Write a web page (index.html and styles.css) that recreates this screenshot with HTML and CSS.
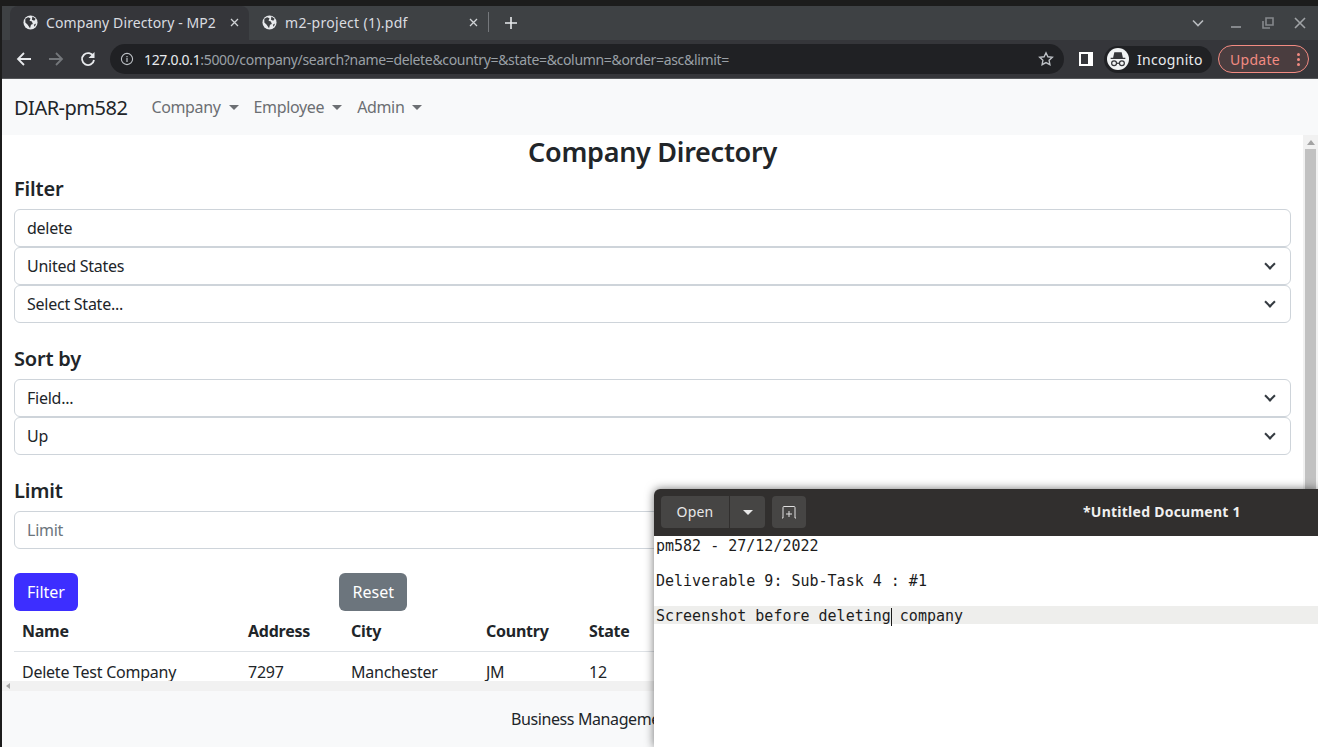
FILE: index.html
```html
<!DOCTYPE html>
<html lang="en">
<head>
    <meta charset="UTF-8">
    <meta name="viewport" content="width=device-width, initial-scale=1.0">
    <title>Company Directory - MP2</title>
    <link rel="stylesheet" href="styles.css">
</head>
<body>

<div class="browser">
    <div class="tabstrip">
        <div class="tab tab-active">
            <svg class="globe" viewBox="0 0 16 16"><circle cx="8" cy="8" r="7.500" fill="#e8eaed"/><path d="M2.500 4l3-1.500 2.500 1-1 2.500 2.500 1 1 2.500-2 1-1 3.500-2.500-3.500-2.500-2.500zM10 1.500l3.500 2.500-1.500 2-2.500-1zM11.500 10.500l2.500-1.500-1.500 3.500z" fill="#35363a"/></svg>
            <span class="tab-title">Company Directory - MP2</span>
            <svg class="tab-close" viewBox="0 0 9 9"><path d="M1 1l7 7M8 1L1 8" stroke="#d0d3d6" stroke-width="1.300"/></svg>
        </div>
        <div class="tab tab-other">
            <svg class="globe" viewBox="0 0 16 16"><circle cx="8" cy="8" r="7.500" fill="#e8eaed"/><path d="M2.500 4l3-1.500 2.500 1-1 2.500 2.500 1 1 2.500-2 1-1 3.500-2.500-3.500-2.500-2.500zM10 1.500l3.500 2.500-1.500 2-2.500-1zM11.500 10.500l2.500-1.500-1.500 3.500z" fill="#3e4144"/></svg>
            <span class="tab-title">m2-project (1).pdf</span>
            <svg class="tab-close" viewBox="0 0 9 9"><path d="M1 1l7 7M8 1L1 8" stroke="#d0d3d6" stroke-width="1.300"/></svg>
        </div>
        <span class="tab-sep"></span>
        <svg class="tab-new" viewBox="0 0 12 12"><path d="M6 0v12M0 6h12" stroke="#e8eaed" stroke-width="1.600"/></svg>
        <div class="win-controls">
            <svg class="win-icon chev" viewBox="0 0 12 8"><path d="M1 1.500l5 5 5-5" fill="none" stroke="#b8bbbf" stroke-width="1.600"/></svg>
            <svg class="win-icon" viewBox="0 0 12 12"><path d="M1 10h10" stroke="#85888c" stroke-width="2"/></svg>
            <svg class="win-icon" viewBox="0 0 12 12"><path d="M4 1h7v7H4z M1 4v7h7" fill="none" stroke="#85888c" stroke-width="1.600"/></svg>
            <svg class="win-icon" viewBox="0 0 12 12"><path d="M1 1l10 10M11 1L1 11" stroke="#a0a3a6" stroke-width="1.600"/></svg>
        </div>
    </div>

    <div class="toolbar">
        <svg class="nav-icon" viewBox="0 0 16 16"><path d="M15 8H2M8 2L2 8l6 6" fill="none" stroke="#e8eaed" stroke-width="1.800"/></svg>
        <svg class="nav-icon" viewBox="0 0 16 16"><path d="M1 8h13M8 2l6 6-6 6" fill="none" stroke="#74777b" stroke-width="1.800"/></svg>
        <svg class="nav-icon" viewBox="0 0 16 16"><path d="M13.500 5.500A6 6 0 1 0 14 9" fill="none" stroke="#e8eaed" stroke-width="1.800"/><path d="M14.500 1v6h-6z" fill="#e8eaed"/></svg>
        <div class="omnibox">
            <svg class="info" viewBox="0 0 14 14"><circle cx="7" cy="7" r="5.600" fill="none" stroke="#bdc1c6" stroke-width="1.100"/><path d="M7 6v4M7 4v1.200" stroke="#bdc1c6" stroke-width="1.200"/></svg>
            <span class="url"><b>127.0.0.1</b>:5000/company/search?name=delete&amp;country=&amp;state=&amp;column=&amp;order=asc&amp;limit=</span>
            <svg class="star" viewBox="0 0 16 16"><path d="M8 1.800l1.900 4 4.400.5-3.200 3 .8 4.400L8 11.600l-3.900 2.100.8-4.400-3.200-3 4.400-.5z" fill="none" stroke="#bdc1c6" stroke-width="1.400"/></svg>
        </div>
        <svg class="side-icon" viewBox="0 0 14 14"><path d="M0 0h14v14H0z" fill="#fff"/><path d="M2 2h7v10H2z" fill="#35363a"/></svg>
        <div class="incognito">
            <span class="incog-badge">
                <svg viewBox="0 0 18 18"><path d="M3 8h12v1H3zM5 8l1-4.500h6L13 8z" fill="#35363a"/><circle cx="5.800" cy="12.500" r="2" fill="none" stroke="#35363a"/><circle cx="12.200" cy="12.500" r="2" fill="none" stroke="#35363a"/><path d="M7.800 12.500h2.400" stroke="#35363a"/></svg>
            </span>
            <span>Incognito</span>
        </div>
        <div class="update">
            <span>Update</span>
            <span class="dots"><i></i><i></i><i></i></span>
        </div>
    </div>

    <div class="page">
        <nav class="navbar">
            <span class="brand">DIAR-pm582</span>
            <span class="nav-link">Company</span>
            <span class="nav-link">Employee</span>
            <span class="nav-link">Admin</span>
        </nav>

        <div class="scroll-area">
            <div class="content">
                <h1>Company Directory</h1>
                <h3>Filter</h3>
                <div class="field">delete</div>
                <div class="field select">United States</div>
                <div class="field select">Select State...</div>

                <h3 class="gap">Sort by</h3>
                <div class="field select">Field...</div>
                <div class="field select">Up</div>

                <h3 class="gap">Limit</h3>
                <div class="field placeholder">Limit</div>

                <div class="buttons">
                    <div class="btn-col"><button class="btn btn-primary">Filter</button></div>
                    <div class="btn-col"><button class="btn btn-secondary">Reset</button></div>
                </div>

                <table>
                    <thead>
                        <tr><th class="c-name">Name</th><th class="c-addr">Address</th><th class="c-city">City</th><th class="c-country">Country</th><th>State</th></tr>
                    </thead>
                    <tbody>
                        <tr><td>Delete Test Company</td><td>7297</td><td>Manchester</td><td>JM</td><td>12</td></tr>
                    </tbody>
                </table>
            </div>
            <div class="vscroll"><span class="arrow-up"></span><span class="vthumb"></span></div>
        </div>
        <div class="hscroll"><span class="arrow-left"></span></div>
        <footer class="footer">Business Management</footer>
    </div>
</div>

<!-- text editor window sits on top of the browser -->
<div class="editor">
    <div class="editor-bar">
        <div class="open-group">
            <span class="open-btn">Open</span>
            <span class="open-arrow"><i></i></span>
        </div>
        <span class="new-btn">
            <svg viewBox="0 0 16 14"><path d="M1 13h1V2.500q0-1 1-1h10q1 0 1 1V13h1" fill="none" stroke="#e0e0e0"/><path d="M8 6v6M5 9h6" stroke="#e0e0e0"/></svg>
        </span>
        <span class="editor-title">*Untitled Document 1</span>
    </div>
    <div class="editor-text">
        <div class="line">pm582 - 27/12/2022</div>
        <div class="line"></div>
        <div class="line">Deliverable 9: Sub-Task 4 : #1</div>
        <div class="line"></div>
        <div class="line line-current">Screenshot before deleting<span class="caret"></span> company</div>
    </div>
</div>

</body>
</html>
```

FILE: styles.css
```css
html, body {
    margin: 0;
    padding: 0;
    height: 100%;
    overflow: hidden;
}
body {
    font-family: "Noto Sans", sans-serif;
    background-color: #1c1c1c;
    position: relative;
}
.browser {
    height: 741px;
    padding-top: 6px;
    padding-left: 2px;
    display: flex;
    flex-direction: column;
}

/* tabs */
.tabstrip {
    height: 34px;
    background-color: #3e4144;
    display: flex;
    align-items: center;
    padding-left: 8px;
    color: #dadce0;
    font-size: 14px;
    flex: none;
}
.tab {
    height: 34px;
    display: flex;
    align-items: center;
    padding-left: 13px;
    padding-bottom: 1px;
    box-sizing: border-box;
    flex: none;
}
.tab-active {
    width: 239px;
    padding-right: 10px;
    background-color: #35363a;
    border-radius: 8px 8px 0 0;
}
.tab-other {
    width: 235px;
    padding-right: 6px;
}
.globe {
    width: 15px;
    height: 15px;
    flex: none;
    margin-right: 8px;
}
.tab-title {
    flex: 1;
    white-space: nowrap;
    overflow: hidden;
    letter-spacing: 0.1px;
}
.tab-other .tab-title {
    letter-spacing: 0.3px;
}
.tab-close {
    width: 9px;
    height: 9px;
    flex: none;
}
.tab-sep {
    width: 1px;
    height: 20px;
    background-color: #75787c;
    margin: 0 0 2px 4px;
    flex: none;
}
.tab-new {
    width: 12px;
    height: 12px;
    margin-left: 16px;
    flex: none;
}
.win-controls {
    margin-left: auto;
    height: 34px;
    display: flex;
    align-items: center;
    gap: 20px;
    padding-right: 12px;
    padding-bottom: 1px;
    box-sizing: border-box;
}
.win-icon {
    width: 12px;
    height: 12px;
}
.chev {
    margin-right: 6px;
}

/* toolbar */
.toolbar {
    height: 38px;
    background-color: #35363a;
    border-bottom: 1px solid #55575a;
    display: flex;
    align-items: center;
    flex: none;
}
.nav-icon {
    width: 16px;
    height: 16px;
    margin-left: 15px;
    margin-right: 1px;
    flex: none;
}
.nav-icon:first-child {
    margin-left: 14px;
}
.omnibox {
    width: 954px;
    height: 30px;
    background-color: #202124;
    border-radius: 15px;
    margin-left: 13px;
    display: flex;
    align-items: center;
    padding: 0 10px;
    box-sizing: border-box;
    flex: none;
    color: #9aa0a6;
    font-size: 14px;
}
.info {
    width: 14px;
    height: 14px;
    margin-right: 10px;
}
.url {
    flex: 1;
    white-space: nowrap;
    letter-spacing: -0.33px;
}
.url b {
    font-weight: 400;
    color: #e8eaed;
}
.star {
    width: 16px;
    height: 16px;
}
.side-icon {
    width: 14px;
    height: 14px;
    margin-left: 15px;
    flex: none;
}
.incognito {
    height: 27px;
    width: 108px;
    border-radius: 14px;
    background-color: #202124;
    color: #e8eaed;
    font-size: 14px;
    letter-spacing: 0.3px;
    display: flex;
    align-items: center;
    gap: 8px;
    margin-left: 11px;
    padding-left: 3px;
    box-sizing: border-box;
    flex: none;
}
.incog-badge {
    width: 22px;
    height: 22px;
    background-color: #f1f3f4;
    border-radius: 50%;
    display: flex;
}
.update {
    height: 28px;
    width: 91px;
    margin-left: 6px;
    border: 1px solid #f28b82;
    border-radius: 14px;
    background-color: #4a3d3f;
    color: #f28b82;
    font-size: 14px;
    letter-spacing: 0.3px;
    display: flex;
    align-items: center;
    justify-content: space-between;
    padding: 0 8px 0 11px;
    box-sizing: border-box;
    flex: none;
}
.dots {
    display: flex;
    flex-direction: column;
    gap: 2px;
}
.dots i {
    width: 3px;
    height: 3px;
    border-radius: 50%;
    background-color: #f28b82;
}

/* page */
.page {
    flex: 1;
    background-color: #f8f9fa;
    display: flex;
    flex-direction: column;
    min-height: 0;
}
.navbar {
    height: 56px;
    flex: none;
    display: flex;
    align-items: center;
    padding-left: 12px;
    box-sizing: border-box;
}
.brand {
    font-size: 20px;
    color: #212529;
    margin-right: 16px;
    letter-spacing: -0.5px;
}
.nav-link {
    font-size: 16px;
    color: #6c6f73;
    margin: 0 7px 0 8px;
    letter-spacing: -0.35px;
}
.nav-link::after {
    content: "";
    display: inline-block;
    margin-left: 8px;
    vertical-align: 3px;
    border-top: 5px solid #6c6f73;
    border-left: 5px solid transparent;
    border-right: 5px solid transparent;
}
.scroll-area {
    height: 546px;
    flex: none;
    background-color: #fff;
    display: flex;
}
.content {
    flex: 1;
    padding: 0 12px;
    min-width: 0;
    color: #212529;
    letter-spacing: -0.25px;
}
h1 {
    font-size: 27px;
    font-weight: 600;
    text-align: center;
    margin: 0;
    line-height: 34px;
    letter-spacing: -0.28px;
}
h3 {
    font-size: 20px;
    font-weight: 600;
    margin: 6px 0;
    line-height: 28px;
    letter-spacing: -0.2px;
}
h3.gap {
    margin-top: 22px;
}
.field {
    height: 38px;
    border: 1px solid #ced4da;
    border-radius: 6px;
    padding: 0 12px;
    box-sizing: border-box;
    display: flex;
    align-items: center;
    font-size: 16px;
    position: relative;
    background-color: #fff;
}
.select::after {
    content: "";
    position: absolute;
    right: 16px;
    top: 12px;
    width: 6px;
    height: 6px;
    border-right: 2px solid #343a40;
    border-bottom: 2px solid #343a40;
    transform: rotate(45deg);
}
.placeholder {
    color: #6c757d;
}
.buttons {
    display: flex;
    margin-top: 24px;
}
.btn-col {
    width: 325px;
}
.btn {
    height: 38px;
    border: 0;
    border-radius: 6px;
    padding: 0 13px;
    color: #fff;
    font-family: inherit;
    font-size: 16px;
    letter-spacing: 0;
}
.btn-primary {
    background-color: #3d2eff;
}
.btn-secondary {
    background-color: #6c757d;
    padding: 0 13.5px;
}
table {
    border-collapse: collapse;
    width: 100%;
    font-size: 16px;
    margin-top: 0;
}
th, td {
    text-align: left;
    padding: 8px;
}
th {
    font-weight: 700;
    border-bottom: 1px solid #dee2e6;
    padding: 9px 8px;
}
td {
    padding-top: 9px;
}
.c-name { width: 210px; }
.c-addr { width: 87px; }
.c-city { width: 119px; }
.c-country { width: 87px; }

/* scrollbars */
.vscroll {
    width: 15px;
    flex: none;
    background-color: #f1f1f1;
    display: flex;
    flex-direction: column;
    align-items: center;
    padding-top: 5px;
    box-sizing: border-box;
}
.arrow-up {
    border-bottom: 5px solid #a3a3a3;
    border-left: 4px solid transparent;
    border-right: 4px solid transparent;
}
.vthumb {
    width: 11px;
    flex: 1;
    background-color: #c1c1c1;
    margin-top: 4px;
}
.hscroll {
    height: 10px;
    flex: none;
    background-color: #f1f1f1;
    display: flex;
    align-items: center;
    padding-left: 4px;
}
.arrow-left {
    border-right: 4px solid #a3a3a3;
    border-top: 3px solid transparent;
    border-bottom: 3px solid transparent;
}
.footer {
    flex: 1;
    font-size: 16px;
    color: #212529;
    padding: 17px 0 0 509px;
    letter-spacing: -0.4px;
    white-space: nowrap;
}

/* editor window */
.editor {
    position: absolute;
    left: 654px;
    top: 489px;
    width: 664px;
    height: 258px;
    background-color: #fff;
    border-radius: 6px 0 0 0;
    box-shadow: 0 0 10px rgba(0, 0, 0, 0.55);
    overflow: hidden;
}
.editor-bar {
    height: 47px;
    background-color: #312f2e;
    display: flex;
    align-items: center;
    padding: 0 0 1px 7px;
    box-sizing: border-box;
    position: relative;
    color: #e8e8e8;
    font-size: 14px;
}
.open-group {
    display: flex;
    height: 32px;
    border-radius: 4px;
    background-color: #464544;
    overflow: hidden;
}
.open-btn {
    width: 68px;
    border-right: 1px solid #312f2e;
    line-height: 31px;
    text-align: center;
    letter-spacing: 0.2px;
}
.open-arrow {
    width: 35px;
    display: flex;
    align-items: center;
    justify-content: center;
}
.open-arrow i {
    border-top: 5px solid #e8e8e8;
    border-left: 5px solid transparent;
    border-right: 5px solid transparent;
}
.new-btn {
    width: 34px;
    height: 32px;
    border-radius: 4px;
    background-color: #464544;
    margin-left: 7px;
    display: flex;
    align-items: center;
    justify-content: center;
}
.new-btn svg {
    width: 16px;
    height: 14px;
}
.editor-title {
    position: absolute;
    left: 429px;
    top: 13px;
    font-weight: 700;
    color: #f0f0f0;
    white-space: nowrap;
    letter-spacing: 0.25px;
}
.editor-text {
    font-family: "DejaVu Sans Mono", monospace;
    font-size: 15px;
    color: #1c1c1c;
}
.line {
    height: 17.5px;
    line-height: 17.5px;
    padding: 2px 0 0 2px;
    box-sizing: border-box;
    white-space: pre;
}
.line-current {
    background-color: #eeeeec;
}
.caret {
    display: inline-block;
    width: 1px;
    height: 18px;
    background-color: #1c1c1c;
    vertical-align: top;
    margin-right: -1px;
}
```
